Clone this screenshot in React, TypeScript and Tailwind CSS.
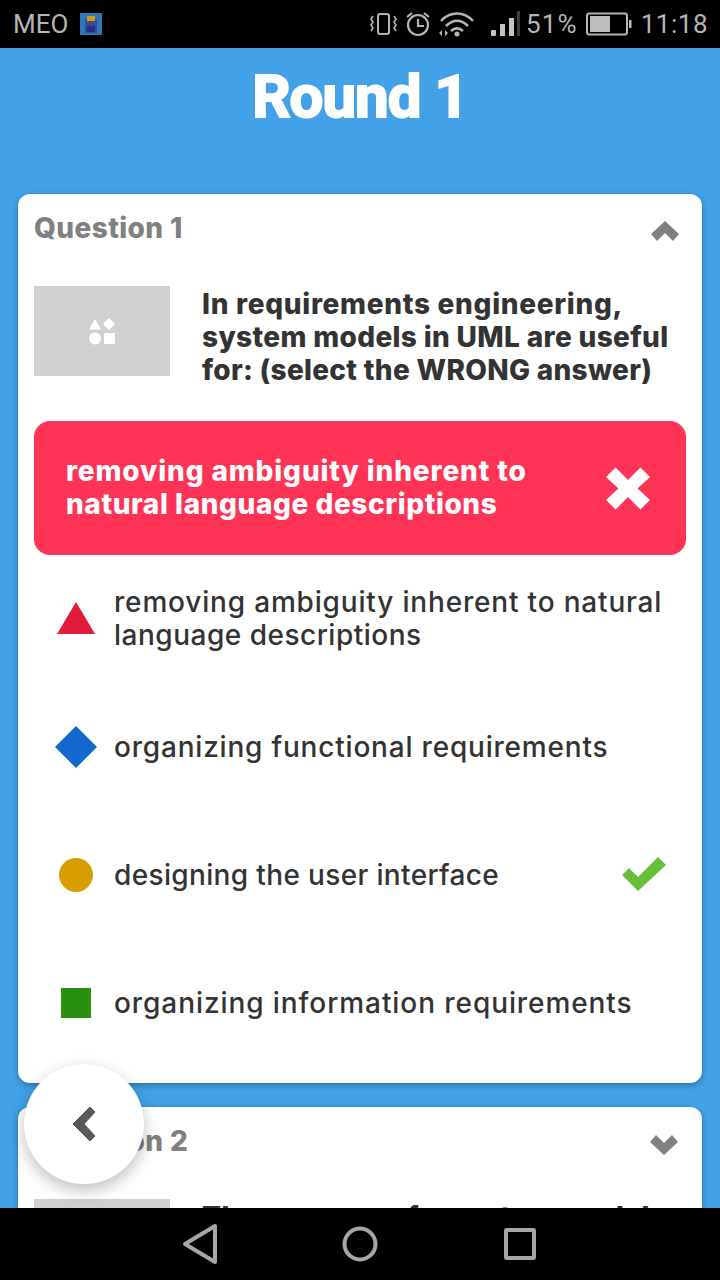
import React from "react";

const sans = "font-['Inter','Liberation_Sans',sans-serif]";

function StatusIcons() {
  return (
    <div className="flex items-center text-[#b5b5b5]">
      <svg width="30" height="26" viewBox="0 0 30 26" fill="none" stroke="#b5b5b5" strokeWidth="2">
        <rect x="9" y="3" width="11" height="20" rx="2" />
        <path d="M4 5 l-2 3 2 3 -2 3 2 3 -2 3" strokeWidth="1.6" />
        <path d="M25 5 l2 3 -2 3 2 3 -2 3 2 3" strokeWidth="1.6" />
      </svg>
      <svg className="ml-[6px]" width="26" height="28" viewBox="0 0 26 28" fill="none" stroke="#b5b5b5" strokeWidth="2.2">
        <circle cx="13" cy="15" r="10" />
        <path d="M13 9v7h6" />
        <path d="M2 7l5-4M24 7l-5-4" />
      </svg>
      <svg className="ml-[8px]" width="36" height="28" viewBox="0 0 36 28" fill="none" stroke="#b5b5b5" strokeWidth="2.6">
        <path d="M2 11C11 1 25 1 34 11" />
        <path d="M7 16c7-7 15-7 22 0" />
        <path d="M12 21c4-3.500 8-3.500 12 0" />
        <circle cx="18" cy="24" r="2.500" fill="#b5b5b5" stroke="none" />
        <path d="M3 26v-6l-3 3zM6 20v6l3-3z" fill="#b5b5b5" stroke="none" />
      </svg>
      <svg className="ml-[15px]" width="30" height="26" viewBox="0 0 30 26">
        <rect x="1" y="19" width="5" height="6" rx="1" fill="#c4c4c4" />
        <rect x="10" y="13" width="5" height="12" fill="#c4c4c4" />
        <rect x="19" y="7" width="5" height="18" fill="#c4c4c4" />
        <rect x="27" y="0" width="3" height="25" fill="#3c3c3c" />
      </svg>
      <span className="ml-[6px] text-[26px] leading-none font-['Roboto',sans-serif] tracking-[1.2px]">51%</span>
      <svg className="ml-[8px]" width="46" height="24" viewBox="0 0 46 24">
        <rect x="1" y="1.500" width="40" height="21" rx="2" fill="none" stroke="#b5b5b5" strokeWidth="2" />
        <rect x="4" y="4" width="20" height="16" fill="#bdbdbd" />
        <rect x="43" y="8" width="2.500" height="8" fill="#b5b5b5" />
      </svg>
      <span className="ml-[9px] text-[26px] leading-none font-['Roboto',sans-serif] tracking-[0.5px]">11:18</span>
    </div>
  );
}

function Shape({ kind }: { kind: string }) {
  return (
    <svg width="44" height="44" viewBox="0 0 44 44" className="shrink-0">
      {kind === "triangle" && <path d="M22 5 L41 37 L3 37 Z" fill="#e21b3c" />}
      {kind === "diamond" && <path d="M22 1 L43 22 L22 43 L1 22 Z" fill="#1368ce" />}
      {kind === "circle" && <circle cx="22" cy="22" r="17" fill="#d89e00" />}
      {kind === "square" && <rect x="7" y="7" width="30" height="30" fill="#298f0f" />}
    </svg>
  );
}

function Answer({ kind, children, height, check }: { kind: string; children: React.ReactNode; height: string; check?: boolean }) {
  return (
    <div className={`flex items-center pl-[36px] pr-[36px] ${height}`}>
      <Shape kind={kind} />
      <div className="ml-[16px] flex-1 text-[28px] leading-[33px] font-medium text-[#333333]">{children}</div>
      {check && (
        <svg width="44" height="34" viewBox="0 0 44 34" className="mb-[2px]">
          <path d="M0 18 L7 11 L16 20 L36 0 L44 8 L16 34 Z" fill="#66bf39" />
        </svg>
      )}
    </div>
  );
}

export default function App() {
  return (
    <div className={`relative flex h-[1280px] w-[720px] flex-col overflow-hidden bg-[#42a1e7] ${sans}`}>
      <div className="flex h-[48px] shrink-0 items-center justify-between bg-black pl-[13px] pr-[12px]">
        <div className="flex items-center">
          <span className="text-[26px] leading-none text-[#b5b5b5] font-['Roboto',sans-serif]">MEO</span>
          <svg className="ml-[12px]" width="22" height="22" viewBox="0 0 22 22">
            <rect width="22" height="22" fill="#2f78b8" />
            <path d="M5 9 Q5 5 8 5 L14 5 Q17 5 17 9 L17 20 L5 20 Z" fill="#3c4a9a" />
            <rect x="7" y="3" width="8" height="5" fill="#d69a1a" />
            <rect x="7" y="13" width="8" height="6" rx="1" fill="#26307e" />
          </svg>
        </div>
        <StatusIcons />
      </div>

      <div className="flex min-h-0 flex-1 flex-col overflow-hidden px-[18px]">
        <h1 className="mt-[14px] mb-[62px] h-[84px] text-center font-['Roboto',sans-serif] text-[60px] leading-[70px] font-bold tracking-[-1px] text-white [-webkit-text-stroke:2px_white]">
          Round 1
        </h1>

        <div className="shrink-0 rounded-[12px] bg-white shadow-[0_2px_6px_rgba(0,0,0,0.3)]">
          <div className="flex h-[68px] items-center justify-between pl-[16px] pr-[22px]">
            <span className="text-[28px] font-extrabold text-[#808080] tracking-[0.4px]">Question 1</span>
            <svg width="30" height="20" viewBox="0 0 30 20" className="mt-[6px]">
              <path d="M15 0 L29 13 L23 20 L15 12 L7 20 L1 13 Z" fill="#808080" />
            </svg>
          </div>
          <div className="mt-[24px] flex pl-[16px] pr-[16px]">
            <div className="flex h-[90px] w-[136px] shrink-0 items-center justify-center bg-[#d0d0d0]">
              <svg width="28" height="27" viewBox="0 0 28 27" fill="white">
                <path d="M7 1 L13 11.500 L1 11.500 Z" />
                <path d="M21 0 L27 6 L21 12 L15 6 Z" />
                <circle cx="7" cy="20.500" r="6" />
                <rect x="16" y="15" width="11" height="11" />
              </svg>
            </div>
            <div className="ml-[32px] mt-[2px] text-[28px] leading-[33px] font-extrabold text-[#333333]">
              <div className="tracking-[0.7px]">In requirements engineering,</div>
              <div className="tracking-[0.35px]">system models in UML are useful</div>
              <div className="tracking-[0.3px]">for: (select the WRONG answer)</div>
            </div>
          </div>

          <div className="mx-[16px] mt-[34px] flex h-[134px] items-center justify-between rounded-[16px] bg-[#ff3355] pl-[32px] pr-[36px]">
            <div className="text-[28px] leading-[33px] font-extrabold text-white">
              <div className="tracking-[0.87px]">removing ambiguity inherent to</div>
              <div className="tracking-[0.58px]">natural language descriptions</div>
            </div>
            <svg width="44" height="43" viewBox="0 0 46 44">
              <path d="M10 0 L23 13 L36 0 L46 10 L33 22 L46 34 L36 44 L23 31 L10 44 L0 34 L13 22 L0 10 Z" fill="white" />
            </svg>
          </div>

          <div className="mt-[31px] pb-[16px]">
            <Answer kind="triangle" height="h-[66px]">
              <div className="tracking-[0.82px]">removing ambiguity inherent to natural</div>
              <div className="tracking-[0.5px]">language descriptions</div>
            </Answer>
            <Answer kind="diamond" height="h-[128px] mt-[31px]">
              <div className="tracking-[0.8px]">organizing functional requirements</div>
            </Answer>
            <Answer kind="circle" height="h-[128px]" check>
              <div className="tracking-[0.35px]">designing the user interface</div>
            </Answer>
            <Answer kind="square" height="h-[128px]">
              <div className="tracking-[0.92px]">organizing information requirements</div>
            </Answer>
          </div>
        </div>

        <div className="mt-[24px] shrink-0 rounded-[12px] bg-white shadow-[0_2px_6px_rgba(0,0,0,0.3)]">
          <div className="flex h-[68px] items-center justify-between pl-[16px] pr-[23px]">
            <span className="text-[28px] font-extrabold text-[#808080] tracking-[0.4px]">Question 2</span>
            <svg width="30" height="20" viewBox="0 0 30 20" className="mt-[8px]">
              <path d="M15 20 L29 7 L23 0 L15 8 L7 0 L1 7 Z" fill="#808080" />
            </svg>
          </div>
          <div className="mt-[24px] flex pl-[16px] pr-[16px]">
            <div className="h-[90px] w-[136px] shrink-0 bg-[#d0d0d0]" />
            <div className="ml-[32px] mt-[2px] text-[28px] leading-[33px] font-extrabold text-[#333333] tracking-[0.5px]">
              The purpose of a system model
            </div>
          </div>
        </div>
      </div>

      <div className="flex h-[72px] shrink-0 items-center justify-center gap-[108px] bg-black">
        <svg width="60" height="44" viewBox="0 0 60 44" fill="none" stroke="#a6a6a6" strokeWidth="4" strokeLinejoin="round">
          <path d="M45 4 L45 40 L15 22 Z" />
        </svg>
        <svg width="44" height="44" viewBox="0 0 44 44" fill="none" stroke="#a6a6a6" strokeWidth="4">
          <circle cx="22" cy="22" r="15.500" />
        </svg>
        <svg width="60" height="44" viewBox="0 0 60 44" fill="none" stroke="#a6a6a6" strokeWidth="4" strokeLinejoin="round">
          <rect x="16" y="8" width="28" height="28" rx="1" />
        </svg>
      </div>

      <button className="absolute left-[24px] top-[1064px] flex h-[120px] w-[120px] items-center justify-center rounded-full bg-white shadow-[0_6px_16px_rgba(0,0,0,0.25)]">
        <svg width="24" height="34" viewBox="0 0 24 34">
          <path d="M18 0 L23 5 L12 17 L23 29 L18 34 L1 17 Z" fill="#595959" stroke="#595959" strokeWidth="1" strokeLinejoin="round" />
        </svg>
      </button>
    </div>
  );
}
